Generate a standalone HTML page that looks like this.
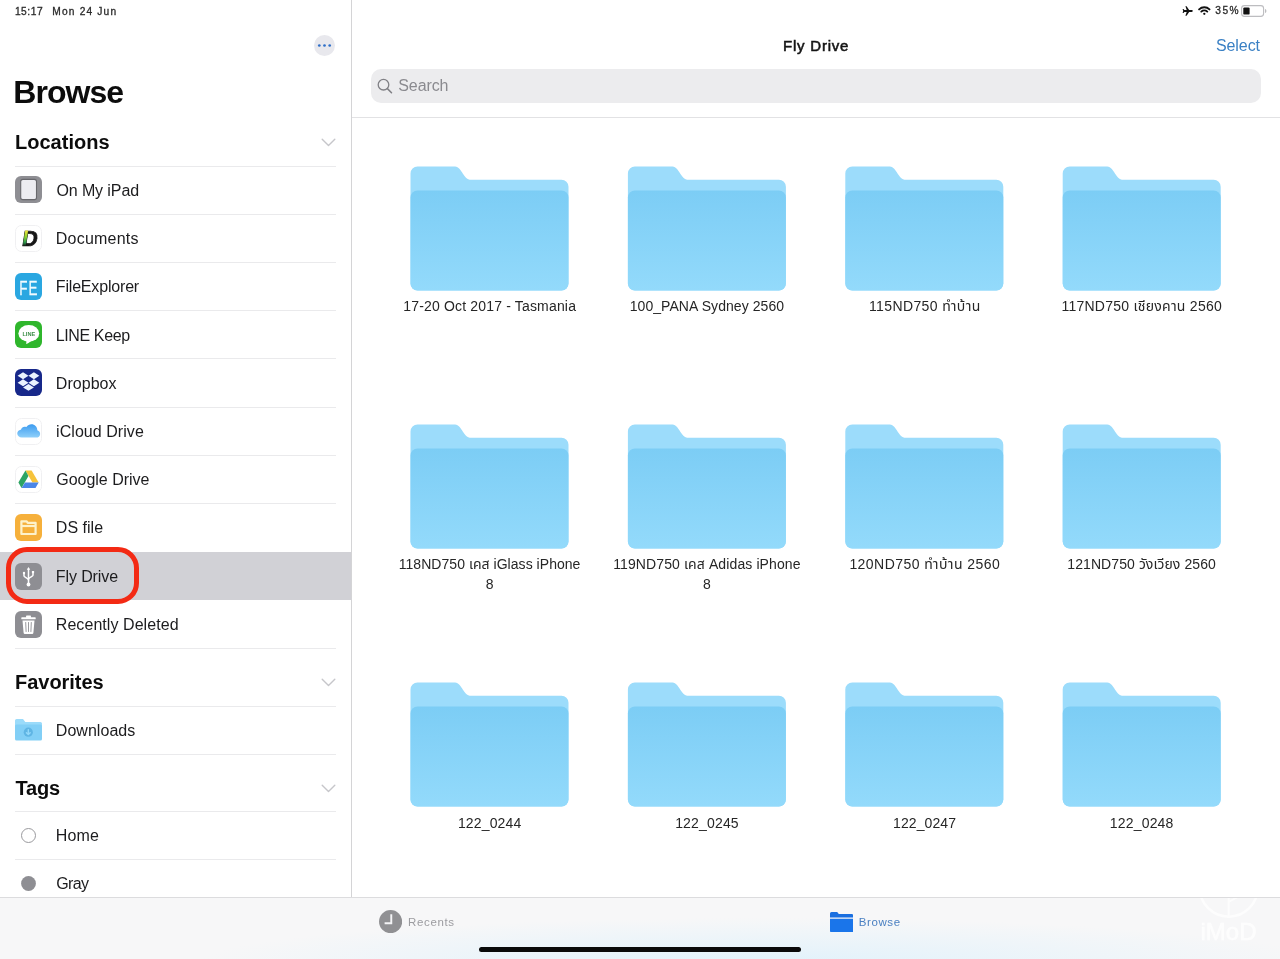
<!DOCTYPE html>
<html lang="en">
<head>
<meta charset="utf-8">
<title>Fly Drive</title>
<style>
*{box-sizing:border-box;margin:0;padding:0}
html,body{width:1280px;height:959px;overflow:hidden;background:#fff}
body{will-change:transform;font-family:"Liberation Sans","Noto Sans Thai",sans-serif;color:#111;position:relative}
#side{position:absolute;left:0;top:0;width:351px;height:898px;background:#fff;overflow:hidden}
#vline{position:absolute;left:351px;top:0;width:1px;height:898px;background:#d4d4d6}
#main{position:absolute;left:352px;top:0;width:928px;height:898px;background:#fff;overflow:hidden}
.chev{position:absolute;left:321px;width:15px;height:9px}
.ln{position:absolute;left:15px;width:321px;height:1px;background:#eaeaec}
.ic{position:absolute;left:15px;width:27px;height:27px}
.fold{position:absolute;width:160px;height:126px}
.lab{position:absolute;width:220px;text-align:center;font-size:14px;line-height:20px;color:#262626}

#tab{position:absolute;left:0;top:897px;width:1280px;height:62px;background:#f7f7f8;border-top:1px solid #dcdcde}
</style>
</head>
<body>
<div id="side">
<div style="position:absolute;left:14.9px;top:4.25px;font-size:10.2px;line-height:13px;color:#2a2a2a;white-space:nowrap;letter-spacing:0.56px;-webkit-text-stroke:0.3px #2a2a2a;transform:translateY(0.5px)">15:17</div>
<div style="position:absolute;left:52.3px;top:4.25px;font-size:10.2px;line-height:13px;color:#2a2a2a;white-space:nowrap;letter-spacing:1.17px;-webkit-text-stroke:0.3px #2a2a2a;transform:translateY(0.5px)">Mon 24 Jun</div>
<svg style="position:absolute;left:314px;top:34.8px;width:21px;height:21px" viewBox="0 0 21 21"><circle cx="10.5" cy="10.5" r="10.5" fill="#e8e8ed"/><circle cx="5.3" cy="10.5" r="1.35" fill="#2f6fc8"/><circle cx="10.5" cy="10.5" r="1.35" fill="#2f6fc8"/><circle cx="15.7" cy="10.5" r="1.35" fill="#2f6fc8"/></svg>
<div style="position:absolute;left:13.3px;top:71.25px;font-size:32px;line-height:40px;color:#0c0c0c;white-space:nowrap;font-weight:bold;letter-spacing:-0.98px;transform:translateY(0.6px)">Browse</div>
<div style="position:absolute;left:14.9px;top:129.75px;font-size:20px;line-height:25px;color:#0c0c0c;white-space:nowrap;font-weight:bold;letter-spacing:0.05px">Locations</div>
<svg class="chev" style="top:138.2px" viewBox="0 0 15 9"><path d="M1.2 1.2l6.3 6.3 6.3-6.3" fill="none" stroke="#c6c6ca" stroke-width="1.4" stroke-linecap="round" stroke-linejoin="round"/></svg>
<div class="ln" style="top:166px"></div>
<svg class="ic" style="top:176px" viewBox="0 0 27 27"><rect width="27" height="27" rx="6" fill="#8e8e93"/><rect x="5.7" y="3.4" width="15.8" height="20.2" rx="2.2" fill="#ececf1" stroke="#68686d" stroke-width="1.1"/></svg>
<div style="position:absolute;left:56.4px;top:179.75px;font-size:16px;line-height:20px;color:#1c1c1e;white-space:nowrap;letter-spacing:-0.1px;transform:translateY(0.8px)">On My iPad</div>
<div class="ln" style="top:214px"></div>
<svg class="ic" style="top:225px" viewBox="0 0 27 27"><rect x=".5" y=".5" width="26" height="26" rx="6" fill="#fff" stroke="#f0f0f2"/><defs><linearGradient id="dg" x1="0" y1="0" x2="0" y2="1"><stop offset="0" stop-color="#f2e63a"/><stop offset=".4" stop-color="#8fd230"/><stop offset=".75" stop-color="#2f9f4f"/><stop offset="1" stop-color="#161616"/></linearGradient></defs><g transform="translate(2.8,0) skewX(-9)"><text x="6.7" y="21" font-family="Liberation Sans,sans-serif" font-weight="bold" font-size="21.5" fill="#161616" stroke="#161616" stroke-width=".7">D</text><rect x="8.3" y="5.6" width="2.9" height="15.4" fill="url(#dg)"/></g></svg>
<div style="position:absolute;left:55.8px;top:228.75px;font-size:16px;line-height:20px;color:#1c1c1e;white-space:nowrap;letter-spacing:0.22px">Documents</div>
<div class="ln" style="top:262px"></div>
<svg class="ic" style="top:273px" viewBox="0 0 27 27"><rect width="27" height="27" rx="6" fill="#2aa7e1"/><text transform="translate(4.3,21.6) scale(.64,1)" font-family="Liberation Sans,sans-serif" font-size="21" fill="#f2fbff" stroke="#f2fbff" stroke-width=".25" letter-spacing="1.5">FE</text></svg>
<div style="position:absolute;left:55.8px;top:276.75px;font-size:16px;line-height:20px;color:#1c1c1e;white-space:nowrap;letter-spacing:-0.18px;transform:translateY(0.28px)">FileExplorer</div>
<div class="ln" style="top:310px"></div>
<svg class="ic" style="top:321px" viewBox="0 0 27 27"><rect width="27" height="27" rx="6" fill="#2fb62c"/><ellipse cx="13.8" cy="12.4" rx="10.4" ry="8.3" fill="#fff"/><path d="M10.5 19.5c.8.3 1 .8.9 1.5l-.2 1.4c0 .5.3.7.8.4 1.8-1 4.5-2.6 6.5-4.5z" fill="#fff"/><text x="13.8" y="14.6" text-anchor="middle" font-family="Liberation Sans,sans-serif" font-weight="bold" font-size="6" fill="#3f8f4a" textLength="12.8" lengthAdjust="spacingAndGlyphs">LINE</text></svg>
<div style="position:absolute;left:55.8px;top:324.75px;font-size:16px;line-height:20px;color:#1c1c1e;white-space:nowrap;letter-spacing:-0.39px;transform:translateY(0.52px)">LINE Keep</div>
<div class="ln" style="top:358px"></div>
<svg class="ic" style="top:369px" viewBox="0 0 27 27"><rect width="27" height="27" rx="6" fill="#17288a"/><path transform="translate(2.6,3.3) scale(.435)" fill="#eaf3ff" d="M12.5 0L0 8l12.5 8 12.5-8zM37.5 0L25 8l12.5 8L50 8zM0 24l12.5 8L25 24l-12.5-8zM37.5 16L25 24l12.5 8L50 24zM12.5 34.7l12.5 8 12.5-8-12.5-8z"/></svg>
<div style="position:absolute;left:55.8px;top:372.75px;font-size:16px;line-height:20px;color:#1c1c1e;white-space:nowrap;letter-spacing:0.05px;transform:translateY(0.76px)">Dropbox</div>
<div class="ln" style="top:407px"></div>
<svg class="ic" style="top:418px" viewBox="0 0 27 27"><defs><linearGradient id="icg" x1="0" y1="0" x2="0" y2="1"><stop offset="0" stop-color="#3d9cf0"/><stop offset="1" stop-color="#8fd0fa"/></linearGradient></defs><rect x=".5" y=".5" width="26" height="26" rx="6" fill="#fff" stroke="#f0f0f2"/><path d="M7.3 19.2c-2.4 0-4.3-1.6-4.3-3.8 0-1.9 1.4-3.4 3.3-3.7.2-.1.3-.2.4-.4.5-1.5 1.8-2.4 3.3-2.4.5 0 1 .1 1.4.3.2.1.4 0 .5-.2 1-1.5 2.7-2.4 4.6-2.4 3.1 0 5.5 2.4 5.6 5.4 0 .2.1.4.3.5 1.4.5 2.4 1.7 2.4 3.2 0 2-1.7 3.5-3.8 3.5z" fill="url(#icg)" transform="translate(-0.9,-0.6) scale(1.05)"/></svg>
<div style="position:absolute;left:56.1px;top:421.75px;font-size:16px;line-height:20px;color:#1c1c1e;white-space:nowrap;letter-spacing:0.05px">iCloud Drive</div>
<div class="ln" style="top:455px"></div>
<svg class="ic" style="top:466px" viewBox="0 0 27 27"><rect x=".5" y=".5" width="26" height="26" rx="6" fill="#fff" stroke="#f0f0f2"/><g transform="translate(-.5,-.7) scale(1.05)"><path d="M10.4 5h5.9l6.7 11.3h-5.9z" fill="#f6c33b"/><path d="M10.4 5 3.7 16.3l3 5.2 6.6-11.3z" fill="#2da464"/><path d="M10 16.3h13l-3 5.2H6.7z" fill="#4a86e8"/></g></svg>
<div style="position:absolute;left:56.3px;top:469.75px;font-size:16px;line-height:20px;color:#1c1c1e;white-space:nowrap;letter-spacing:-0.03px;transform:translateY(0.24px)">Google Drive</div>
<div class="ln" style="top:503px"></div>
<svg class="ic" style="top:514px" viewBox="0 0 27 27"><rect width="27" height="27" rx="6" fill="#f6b03b"/><g fill="none" stroke="#fdf2cc" stroke-width="2.2" stroke-linejoin="round"><path d="M6.4 7.3h5.3l1 1.5h7.9V20H6.4z"/><path d="M6.4 12h14.2"/></g></svg>
<div style="position:absolute;left:55.8px;top:517.75px;font-size:16px;line-height:20px;color:#1c1c1e;white-space:nowrap;letter-spacing:0.03px;transform:translateY(0.48px)">DS file</div>
<div style="position:absolute;left:0;top:552px;width:351px;height:48px;background:#d1d1d6"></div>
<svg class="ic" style="top:563px" viewBox="0 0 27 27"><rect width="27" height="27" rx="6" fill="#8e8e93"/><g fill="none" stroke="#fff" stroke-width="1.5" stroke-linecap="round" stroke-linejoin="round"><path d="M13.5 6v15"/><path d="M9 10.5v2.5c0 1.2 4.5 2.2 4.5 4"/><path d="M18 9.8v2.4c0 1.2-4.5 2.2-4.5 4"/></g><path d="M13.5 4l1.7 2.8h-3.4z" fill="#fff"/><circle cx="13.5" cy="21.5" r="1.9" fill="#fff"/><circle cx="9" cy="10" r="1.2" fill="#fff"/><rect x="16.9" y="8" width="2.2" height="2.2" fill="#fff"/></svg>
<div style="position:absolute;left:55.8px;top:565.75px;font-size:16px;line-height:20px;color:#1c1c1e;white-space:nowrap;letter-spacing:-0.11px;transform:translateY(0.72px)">Fly Drive</div>
<svg class="ic" style="top:611px" viewBox="0 0 27 27"><rect width="27" height="27" rx="6" fill="#8e8e93"/><path d="M7.5 9.5h12l-1.1 12.3a1.3 1.3 0 0 1-1.3 1.2H9.9a1.3 1.3 0 0 1-1.3-1.2z" fill="#fff"/><rect x="6.3" y="6.3" width="14.4" height="2" rx=".6" fill="#fff"/><rect x="11" y="4.5" width="5" height="2.5" rx=".8" fill="#fff"/><g stroke="#8e8e93" stroke-width=".9" stroke-linecap="round"><path d="M10.7 11.5l.4 9M13.5 11.5v9M16.3 11.5l-.4 9"/></g></svg>
<div style="position:absolute;left:55.8px;top:613.75px;font-size:16px;line-height:20px;color:#1c1c1e;white-space:nowrap;letter-spacing:0.06px;transform:translateY(0.96px)">Recently Deleted</div>
<div class="ln" style="top:648px"></div>
<div style="position:absolute;left:6px;top:547px;width:132.5px;height:57px;border:5px solid #f32a14;border-radius:21px"></div>
<div style="position:absolute;left:15.1px;top:668.75px;font-size:20px;line-height:25px;color:#0c0c0c;white-space:nowrap;font-weight:bold;letter-spacing:-0.05px;transform:translateY(0.8px)">Favorites</div>
<svg class="chev" style="top:678.2px" viewBox="0 0 15 9"><path d="M1.2 1.2l6.3 6.3 6.3-6.3" fill="none" stroke="#c6c6ca" stroke-width="1.4" stroke-linecap="round" stroke-linejoin="round"/></svg>
<div class="ln" style="top:706px"></div>
<svg class="ic" style="top:717px" viewBox="0 0 27 27"><path d="M0 3.6a1.6 1.6 0 0 1 1.6-1.6h6.4l2.3 3H25.4A1.6 1.6 0 0 1 27 6.6V12H0z" fill="#9bdbfa"/><rect x="0" y="7.4" width="27" height="16.2" rx="1.6" fill="#82cff6"/><circle cx="13.3" cy="15.2" r="4.6" fill="#5fb5e4"/><path d="M13.3 12.6v4.8M11.4 15.7l1.9 1.9 1.9-1.9" stroke="#93d8fa" stroke-width="1.4" fill="none" stroke-linecap="round" stroke-linejoin="round"/></svg>
<div style="position:absolute;left:55.8px;top:720.75px;font-size:16px;line-height:20px;color:#1c1c1e;white-space:nowrap;letter-spacing:0.04px">Downloads</div>
<div class="ln" style="top:754px"></div>
<div style="position:absolute;left:15.4px;top:774.75px;font-size:20px;line-height:25px;color:#0c0c0c;white-space:nowrap;font-weight:bold;letter-spacing:-0.16px;transform:translateY(0.6px)">Tags</div>
<svg class="chev" style="top:784px" viewBox="0 0 15 9"><path d="M1.2 1.2l6.3 6.3 6.3-6.3" fill="none" stroke="#c6c6ca" stroke-width="1.4" stroke-linecap="round" stroke-linejoin="round"/></svg>
<div class="ln" style="top:811px"></div>
<svg class="ic" style="top:822px" viewBox="0 0 27 27"><circle cx="13.5" cy="13.5" r="7" fill="#fff" stroke="#9a9a9e" stroke-width="1"/></svg>
<div style="position:absolute;left:55.8px;top:825.75px;font-size:16px;line-height:20px;color:#1c1c1e;white-space:nowrap;letter-spacing:0.14px;transform:translateY(0.4px)">Home</div>
<div class="ln" style="top:859px"></div>
<svg class="ic" style="top:870px" viewBox="0 0 27 27"><circle cx="13.5" cy="13.5" r="7.4" fill="#8e8e93"/></svg>
<div style="position:absolute;left:56.3px;top:873.75px;font-size:16px;line-height:20px;color:#1c1c1e;white-space:nowrap;letter-spacing:-0.62px;transform:translateY(0.4px)">Gray</div>
</div>
<div id="vline"></div>
<div id="main">
<svg style="position:absolute;left:830px;top:5.5px;width:11px;height:10px" viewBox="0 0 22 20"><path d="M21.5 10c0-1-.9-1.8-2.2-1.8h-5L9.2.5H6.8L9.4 8.2H4.8L3 5.8H1.2L2.4 10 1.2 14.2H3l1.8-2.4h4.6L6.8 19.5h2.4l5.1-7.7h5c1.3 0 2.2-.8 2.2-1.8z" fill="#111"/></svg>
<svg style="position:absolute;left:846.3px;top:5.8px;width:12.6px;height:9.2px" viewBox="0 0 26 19"><g fill="none" stroke="#111" stroke-width="3.9" stroke-linecap="round"><path d="M2.3 7a15.5 15.5 0 0 1 21.4 0"/><path d="M6.8 11.6a9 9 0 0 1 12.4 0"/></g><circle cx="13" cy="16.2" r="2.4" fill="#111"/></svg>
<div style="position:absolute;left:863.3px;top:4.25px;font-size:10.2px;line-height:13px;color:#2a2a2a;white-space:nowrap;letter-spacing:1.48px;-webkit-text-stroke:0.3px #2a2a2a;transform:translateY(0.4px)">35%</div>
<svg style="position:absolute;left:888.5px;top:4.8px;width:26px;height:12px" viewBox="0 0 26 12"><rect x=".6" y=".6" width="22" height="10.8" rx="2.8" fill="#fff" stroke="#bdbdc0" stroke-width="1.1"/><rect x="2.3" y="2.4" width="6.3" height="7.2" rx="1.2" fill="#111"/><path d="M24 4c1 .3 1.4 1.1 1.4 2s-.4 1.7-1.4 2z" fill="#bdbdc0"/></svg>
<div style="position:absolute;left:431.1px;top:35.25px;font-size:15px;line-height:19px;color:#141414;white-space:nowrap;letter-spacing:0.76px;-webkit-text-stroke:0.55px #141414;transform:translateY(0.6px)">Fly Drive</div>
<div style="position:absolute;left:863.9px;top:35.75px;font-size:16px;line-height:20px;color:#3a80c4;white-space:nowrap;letter-spacing:-0.06px">Select</div>
<div style="position:absolute;left:18.7px;top:69.4px;width:890px;height:33.4px;border-radius:10px;background:#ececee"></div>
<svg style="position:absolute;left:24.6px;top:78px;width:16px;height:16px" viewBox="0 0 16 16"><circle cx="6.5" cy="6.7" r="5.3" fill="none" stroke="#808085" stroke-width="1.3"/><path d="M10.4 10.6l4.1 4.1" stroke="#808085" stroke-width="1.5" stroke-linecap="round"/></svg>
<div style="position:absolute;left:46.3px;top:75.75px;font-size:16px;line-height:20px;color:#8a8a8f;white-space:nowrap;letter-spacing:-0.1px;transform:translateY(0.4px)">Search</div>
<div style="position:absolute;left:0;top:117px;width:928px;height:1px;background:#e2e2e4"></div>
<svg style="position:absolute;width:0;height:0"><defs><linearGradient id="fg" x1="0" y1="0" x2="0" y2="1"><stop offset="0" stop-color="#7ccdf5"/><stop offset="1" stop-color="#93dafb"/></linearGradient></defs></svg>
<svg class="fold" style="left:57px;top:165px" viewBox="0 0 160 126"><g transform="translate(0.5,0.5)"><path d="M1 8a7 7 0 0 1 7-7H44c4.5 0 6 2 8.5 5.7s4.5 7.6 9.5 7.6H152a7 7 0 0 1 7 7V118a7 7 0 0 1-7 7H8a7 7 0 0 1-7-7z" fill="#9cdcfb"/><path d="M1 32a7 7 0 0 1 7-7H152a7 7 0 0 1 7 7v86a7 7 0 0 1-7 7H8a7 7 0 0 1-7-7z" fill="url(#fg)"/></g></svg>
<div class="lab" style="left:27.68px;top:296px;letter-spacing:0.17px">17-20 Oct 2017 - Tasmania</div>
<svg class="fold" style="left:274px;top:165px" viewBox="0 0 160 126"><g transform="translate(0.9,0.5)"><path d="M1 8a7 7 0 0 1 7-7H44c4.5 0 6 2 8.5 5.7s4.5 7.6 9.5 7.6H152a7 7 0 0 1 7 7V118a7 7 0 0 1-7 7H8a7 7 0 0 1-7-7z" fill="#9cdcfb"/><path d="M1 32a7 7 0 0 1 7-7H152a7 7 0 0 1 7 7v86a7 7 0 0 1-7 7H8a7 7 0 0 1-7-7z" fill="url(#fg)"/></g></svg>
<div class="lab" style="left:244.93px;top:296px;letter-spacing:0.07px">100_PANA Sydney 2560</div>
<svg class="fold" style="left:492px;top:165px" viewBox="0 0 160 126"><g transform="translate(0.3,0.5)"><path d="M1 8a7 7 0 0 1 7-7H44c4.5 0 6 2 8.5 5.7s4.5 7.6 9.5 7.6H152a7 7 0 0 1 7 7V118a7 7 0 0 1-7 7H8a7 7 0 0 1-7-7z" fill="#9cdcfb"/><path d="M1 32a7 7 0 0 1 7-7H152a7 7 0 0 1 7 7v86a7 7 0 0 1-7 7H8a7 7 0 0 1-7-7z" fill="url(#fg)"/></g></svg>
<div class="lab" style="left:462.8px;top:296px;letter-spacing:0.39px">115ND750 ทำบ้าน</div>
<svg class="fold" style="left:709px;top:165px" viewBox="0 0 160 126"><g transform="translate(0.7,0.5)"><path d="M1 8a7 7 0 0 1 7-7H44c4.5 0 6 2 8.5 5.7s4.5 7.6 9.5 7.6H152a7 7 0 0 1 7 7V118a7 7 0 0 1-7 7H8a7 7 0 0 1-7-7z" fill="#9cdcfb"/><path d="M1 32a7 7 0 0 1 7-7H152a7 7 0 0 1 7 7v86a7 7 0 0 1-7 7H8a7 7 0 0 1-7-7z" fill="url(#fg)"/></g></svg>
<div class="lab" style="left:679.73px;top:296px;letter-spacing:0.26px">117ND750 เชียงคาน 2560</div>
<svg class="fold" style="left:57px;top:423px" viewBox="0 0 160 126"><g transform="translate(0.5,0.5)"><path d="M1 8a7 7 0 0 1 7-7H44c4.5 0 6 2 8.5 5.7s4.5 7.6 9.5 7.6H152a7 7 0 0 1 7 7V118a7 7 0 0 1-7 7H8a7 7 0 0 1-7-7z" fill="#9cdcfb"/><path d="M1 32a7 7 0 0 1 7-7H152a7 7 0 0 1 7 7v86a7 7 0 0 1-7 7H8a7 7 0 0 1-7-7z" fill="url(#fg)"/></g></svg>
<div class="lab" style="left:27.62px;top:554px;letter-spacing:0.04px">118ND750 เคส iGlass iPhone<br>8</div>
<svg class="fold" style="left:274px;top:423px" viewBox="0 0 160 126"><g transform="translate(0.9,0.5)"><path d="M1 8a7 7 0 0 1 7-7H44c4.5 0 6 2 8.5 5.7s4.5 7.6 9.5 7.6H152a7 7 0 0 1 7 7V118a7 7 0 0 1-7 7H8a7 7 0 0 1-7-7z" fill="#9cdcfb"/><path d="M1 32a7 7 0 0 1 7-7H152a7 7 0 0 1 7 7v86a7 7 0 0 1-7 7H8a7 7 0 0 1-7-7z" fill="url(#fg)"/></g></svg>
<div class="lab" style="left:244.95px;top:554px;letter-spacing:0.11px">119ND750 เคส Adidas iPhone<br>8</div>
<svg class="fold" style="left:492px;top:423px" viewBox="0 0 160 126"><g transform="translate(0.3,0.5)"><path d="M1 8a7 7 0 0 1 7-7H44c4.5 0 6 2 8.5 5.7s4.5 7.6 9.5 7.6H152a7 7 0 0 1 7 7V118a7 7 0 0 1-7 7H8a7 7 0 0 1-7-7z" fill="#9cdcfb"/><path d="M1 32a7 7 0 0 1 7-7H152a7 7 0 0 1 7 7v86a7 7 0 0 1-7 7H8a7 7 0 0 1-7-7z" fill="url(#fg)"/></g></svg>
<div class="lab" style="left:462.83px;top:554px;letter-spacing:0.45px">120ND750 ทำบ้าน 2560</div>
<svg class="fold" style="left:709px;top:423px" viewBox="0 0 160 126"><g transform="translate(0.7,0.5)"><path d="M1 8a7 7 0 0 1 7-7H44c4.5 0 6 2 8.5 5.7s4.5 7.6 9.5 7.6H152a7 7 0 0 1 7 7V118a7 7 0 0 1-7 7H8a7 7 0 0 1-7-7z" fill="#9cdcfb"/><path d="M1 32a7 7 0 0 1 7-7H152a7 7 0 0 1 7 7v86a7 7 0 0 1-7 7H8a7 7 0 0 1-7-7z" fill="url(#fg)"/></g></svg>
<div class="lab" style="left:679.64px;top:554px;letter-spacing:0.08px">121ND750 วังเวียง 2560</div>
<svg class="fold" style="left:57px;top:681px" viewBox="0 0 160 126"><g transform="translate(0.5,0.5)"><path d="M1 8a7 7 0 0 1 7-7H44c4.5 0 6 2 8.5 5.7s4.5 7.6 9.5 7.6H152a7 7 0 0 1 7 7V118a7 7 0 0 1-7 7H8a7 7 0 0 1-7-7z" fill="#9cdcfb"/><path d="M1 32a7 7 0 0 1 7-7H152a7 7 0 0 1 7 7v86a7 7 0 0 1-7 7H8a7 7 0 0 1-7-7z" fill="url(#fg)"/></g></svg>
<div class="lab" style="left:27.67px;top:813px;letter-spacing:0.14px">122_0244</div>
<svg class="fold" style="left:274px;top:681px" viewBox="0 0 160 126"><g transform="translate(0.9,0.5)"><path d="M1 8a7 7 0 0 1 7-7H44c4.5 0 6 2 8.5 5.7s4.5 7.6 9.5 7.6H152a7 7 0 0 1 7 7V118a7 7 0 0 1-7 7H8a7 7 0 0 1-7-7z" fill="#9cdcfb"/><path d="M1 32a7 7 0 0 1 7-7H152a7 7 0 0 1 7 7v86a7 7 0 0 1-7 7H8a7 7 0 0 1-7-7z" fill="url(#fg)"/></g></svg>
<div class="lab" style="left:244.99px;top:813px;letter-spacing:0.17px">122_0245</div>
<svg class="fold" style="left:492px;top:681px" viewBox="0 0 160 126"><g transform="translate(0.3,0.5)"><path d="M1 8a7 7 0 0 1 7-7H44c4.5 0 6 2 8.5 5.7s4.5 7.6 9.5 7.6H152a7 7 0 0 1 7 7V118a7 7 0 0 1-7 7H8a7 7 0 0 1-7-7z" fill="#9cdcfb"/><path d="M1 32a7 7 0 0 1 7-7H152a7 7 0 0 1 7 7v86a7 7 0 0 1-7 7H8a7 7 0 0 1-7-7z" fill="url(#fg)"/></g></svg>
<div class="lab" style="left:462.64px;top:813px;letter-spacing:0.09px">122_0247</div>
<svg class="fold" style="left:709px;top:681px" viewBox="0 0 160 126"><g transform="translate(0.7,0.5)"><path d="M1 8a7 7 0 0 1 7-7H44c4.5 0 6 2 8.5 5.7s4.5 7.6 9.5 7.6H152a7 7 0 0 1 7 7V118a7 7 0 0 1-7 7H8a7 7 0 0 1-7-7z" fill="#9cdcfb"/><path d="M1 32a7 7 0 0 1 7-7H152a7 7 0 0 1 7 7v86a7 7 0 0 1-7 7H8a7 7 0 0 1-7-7z" fill="url(#fg)"/></g></svg>
<div class="lab" style="left:679.69px;top:813px;letter-spacing:0.17px">122_0248</div>
</div>
<div id="tab">
<div style="position:absolute;left:0;top:0;width:1280px;height:61px;background:radial-gradient(ellipse 560px 44px at 760px 64px,rgba(218,240,252,.75),rgba(218,240,252,0))"></div>
<svg style="position:absolute;left:379px;top:12.3px;width:23.2px;height:23.2px" viewBox="0 0 24 24"><circle cx="12" cy="12" r="12" fill="#909093"/><path d="M12.7 4.5v9.3H5.8" fill="none" stroke="#f4f4f6" stroke-width="2"/></svg>
<div style="position:absolute;left:408.1px;top:17.25px;font-size:11.5px;line-height:14px;color:#9c9ca0;white-space:nowrap;letter-spacing:0.64px">Recents</div>
<svg style="position:absolute;left:829.7px;top:13.9px;width:23.4px;height:20.3px" viewBox="0 0 23.4 20.3"><path d="M0 1.5A1.5 1.5 0 0 1 1.5 0h5.7l1.6 2.1H21.9a1.5 1.5 0 0 1 1.5 1.5V5.4H0z" fill="#1a6fe0"/><path d="M0 6.8H23.4V18.8a1.5 1.5 0 0 1-1.5 1.5H1.5A1.5 1.5 0 0 1 0 18.8z" fill="#1a75ea"/></svg>
<div style="position:absolute;left:858.7px;top:17.25px;font-size:11.5px;line-height:14px;color:#4a80c2;white-space:nowrap;letter-spacing:0.61px">Browse</div>
<div style="position:absolute;left:479px;top:49px;width:322px;height:5px;border-radius:3px;background:#0a0a0a"></div>
<svg style="position:absolute;left:1195px;top:0;width:70px;height:52px" viewBox="0 0 70 52"><g fill="none" stroke="#fff" opacity=".75"><circle cx="33.7" cy="-10.3" r="29" stroke-width="2.5"/><path d="M33.7 -10V19M33.7 4L55 -8" stroke-width="2"/></g><text x="33.5" y="41.5" text-anchor="middle" font-family="Liberation Sans,sans-serif" font-size="24" fill="#fff" stroke="#fff" stroke-width=".5" opacity=".8">iMoD</text></svg>
</div>
</body>
</html>
